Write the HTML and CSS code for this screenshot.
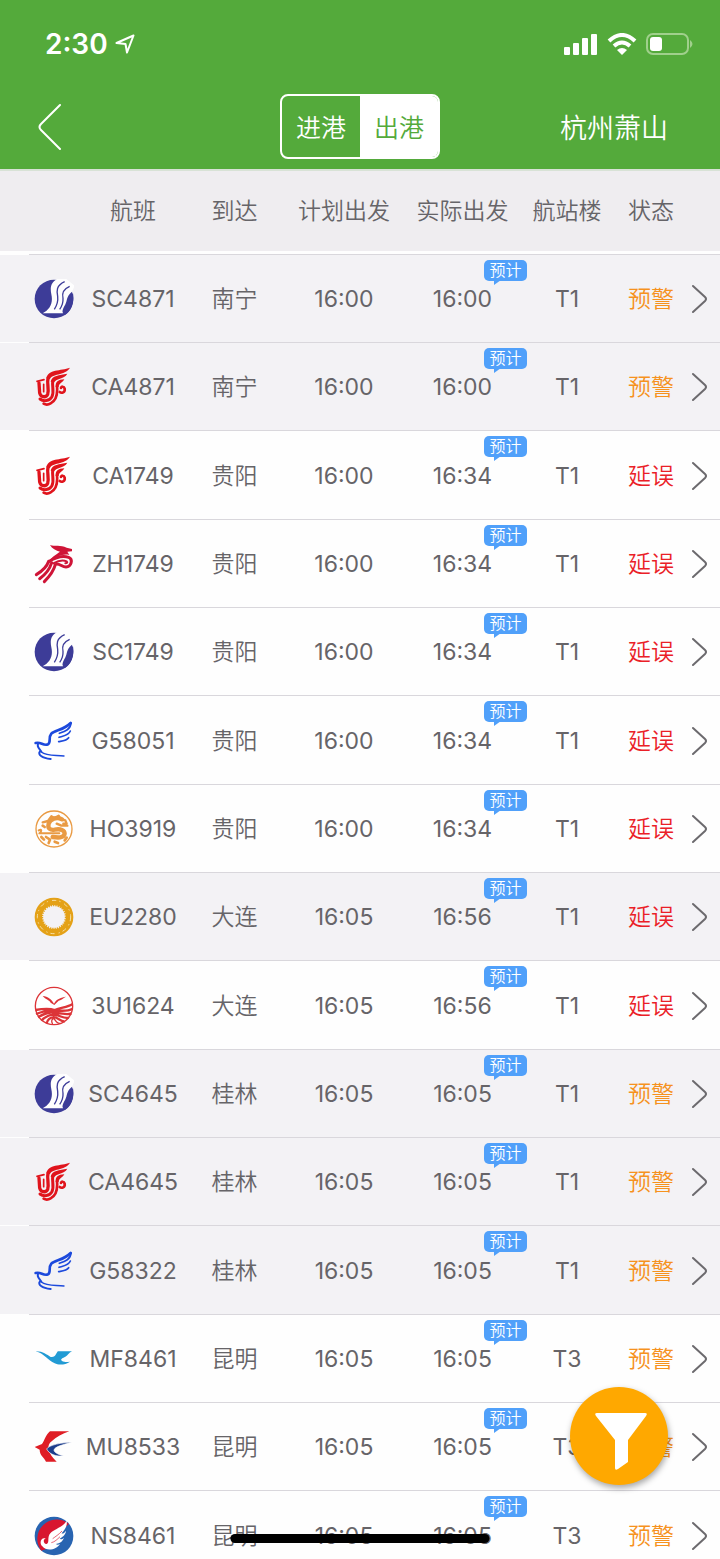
FILE: index.html
```
<!DOCTYPE html>
<html lang="zh-CN">
<head>
    <meta charset="UTF-8">
    <meta name="viewport" content="width=device-width, initial-scale=1.0">
    <title>航班动态</title>
    <link rel="stylesheet" href="styles.css">
</head>
<body>
    <!-- airline logos -->
    <svg class="sprite" aria-hidden="true">
        <symbol id="logo-SC" viewBox="0 0 120 120">
            <circle cx="60" cy="60" r="58" fill="#3d3c98"/>
            <path class="cut" d="M70 0C50 10 48 26 52 46C58 72 48 92 26 103H88C80 94 93 82 97 68C101 52 104 46 114 38L122 20L92 -4Z"/>
            <path d="M92 8C66 20 68 36 71 52C73 70 67 82 61 91M107 22C84 32 84 46 87 58C88 72 82 84 77 91" fill="none" stroke="#3d3c98" stroke-width="4"/>
            <path d="M117 43C104 54 107 68 100 84C96 94 92 100 86 103L94 107C110 98 122 72 117 43Z" fill="#3d3c98"/>
        </symbol>
        <symbol id="logo-CA" viewBox="0 0 120 120">
            <g fill="#e0141c">
                <path d="M108 2C80 12 42 6 37 34L48 37C52 18 92 28 108 2Z"/>
                <path d="M100 20C76 24 53 25 50 44L61 46C64 34 90 38 100 20Z"/>
                <path d="M91 37C72 38 64 44 65 60H74C75 48 85 48 91 37Z"/>
            </g>
            <g fill="none" stroke="#e0141c" stroke-linecap="round">
                <path d="M42 34C38 50 46 66 41 82C36 93 20 91 17 78L15 48" stroke-width="10"/>
                <path d="M56 44C54 60 61 74 54 89C47 103 28 104 18 96" stroke-width="9"/>
                <path d="M69 58C71 80 68 100 50 109C42 114 34 113 29 110" stroke-width="8"/>
                <path d="M77 75C83 80 94 76 92 65C90 57 81 58 81 63" stroke-width="8"/>
                <path d="M9 43L30 38M29 52V74" stroke-width="5"/>
            </g>
        </symbol>
        <symbol id="logo-ZH" viewBox="0 0 120 120">
            <path d="M48 3C62 8 80 2 98 11L114 15V22L100 23L106 33C88 28 68 38 48 50C54 36 70 30 78 23C66 20 54 14 48 3Z" fill="#cf1437"/>
            <g fill="none" stroke="#cf1437" stroke-linecap="round">
                <path d="M46 52C62 42 84 34 104 40C118 46 112 68 96 69C84 69 80 60 68 60" stroke-width="9"/>
                <path d="M58 58C72 50 88 47 98 52C102 56 98 58 94 58" stroke-width="6"/>
                <path d="M44 52C38 70 24 82 7 92M53 56C47 76 34 92 17 104M64 62C58 84 44 100 31 113" stroke-width="9"/>
            </g>
        </symbol>
        <symbol id="logo-G5" viewBox="0 0 120 120">
            <g fill="none" stroke="#1c49dc" stroke-linecap="round">
                <path d="M5 66C20 61 28 76 42 70C52 64 42 50 52 38C62 28 92 26 110 6" stroke-width="8"/>
                <path d="M13 67C6 78 18 84 22 92M18 91C10 100 24 112 50 114" stroke-width="6"/>
                <path d="M111 6C110 25 94 31 76 37M109 30C104 43 90 44 75 49M104 50C98 59 84 60 74 62" stroke-width="5"/>
                <path d="M22 93C38 106 62 102 90 105" stroke-width="4"/>
            </g>
        </symbol>
        <symbol id="logo-HO" viewBox="0 0 120 120">
            <g fill="none" stroke="#e99a43" stroke-linecap="round" stroke-linejoin="round">
                <circle cx="60" cy="60" r="54" stroke-width="4"/>
                <path d="M84 31C68 22 48 30 44 44C40 60 50 64 62 62C80 58 92 64 92 74C90 88 70 86 56 84" stroke-width="13"/>
                <path d="M26 40L42 36L52 22L62 28L74 20L78 30L94 34L98 44L88 44M68 44L82 50L100 50" stroke-width="7"/>
                <path d="M14 64C26 58 22 70 16 73H76" stroke-width="6"/>
                <path d="M22 84L30 92M36 84L48 92L44 102M62 98L72 102M92 94L98 86M26 50L32 54" stroke-width="8"/>
            </g>
        </symbol>
        <symbol id="logo-EU" viewBox="0 0 120 120">
            <circle cx="60" cy="60" r="47" fill="none" stroke="#e4a117" stroke-width="22"/>
            <circle cx="60" cy="60" r="35" fill="none" stroke="#e4a117" stroke-width="5" stroke-dasharray="4 3"/>
            <circle cx="60" cy="60" r="50" fill="none" stroke="#f6e0a6" stroke-width="3" stroke-dasharray="13 9 4 12"/>
        </symbol>
        <symbol id="logo-3U" viewBox="0 0 120 120">
            <circle cx="60" cy="60" r="56" fill="#fff" stroke="#dc3438" stroke-width="4"/>
            <path d="M26 30C42 31 53 41 60 53C68 37 82 35 96 32C88 36 84 42 74 44L61 57L50 50C44 40 36 42 26 30Z" fill="#dc3438"/>
            <g fill="none" stroke="#dc3438" stroke-width="7">
                <path d="M4 72C28 68 44 66 62 72C82 64 100 64 116 54M6 84C28 76 48 70 62 76C84 72 98 78 116 68M12 94C28 84 50 76 61 82C80 78 96 90 112 82M22 104C32 92 52 84 59 88C74 84 88 100 104 95M38 112C40 100 50 94 57 94C68 90 80 108 92 106"/>
                <path d="M56 114C50 106 54 98 60 96C62 104 72 114 80 112" stroke-width="4"/>
            </g>
        </symbol>
        <symbol id="logo-MF" viewBox="0 0 120 120">
            <path d="M5 37C26 36 38 47 50 54C66 57 66 41 72 37H114C104 42 102 49 94 53C86 57 80 59 82 64C86 71 98 69 108 68C94 78 74 79 62 73C42 65 30 43 5 37Z" fill="#229bd4"/>
        </symbol>
        <symbol id="logo-MU" viewBox="0 0 120 120">
            <path d="M48 13H106C84 20 68 30 54 42C34 54 44 82 68 104H36C30 90 17 86 17 68L2 60L24 51C31 42 35 23 48 13Z" fill="#df1d25"/>
            <path class="cut-line" d="M114 46C84 46 44 54 38 66C46 82 66 89 88 87C72 82 60 76 60 69C62 59 90 52 114 46Z" fill="#1d3e8d" stroke-width="2"/>
        </symbol>
        <symbol id="logo-NS" viewBox="0 0 120 120">
            <circle cx="60" cy="60" r="58" fill="#2864b1"/>
            <path d="M22 104A58 58 0 0 1 105 24C90 38 62 50 50 60L38 98Z" fill="#d8162f"/>
            <path d="M98 14C87 34 60 39 49 52C38 64 48 80 38 84C28 85 26 69 35 68C22 63 14 80 25 91C38 108 68 101 78 84C72 87 68 86 66 84C78 82 87 75 90 65C84 71 78 70 77 68C88 62 96 53 96 44C91 52 85 54 83 52C92 42 101 30 98 14Z" fill="#fff"/>
            <path d="M56 68C64 62 74 56 84 45M52 80C62 78 70 70 78 62" fill="none" stroke="#d8162f" stroke-width="2"/>
        </symbol>
    </svg>

    <div class="app">
        <header class="header">
            <div class="status-bar">
                <div class="clock">
                    <span>2:30</span>
                    <svg width="20" height="20" viewBox="0 0 20 20"><path d="M18.500 1.500L1.500 9L10.500 10L12 18.500Z" fill="none" stroke="#fff" stroke-width="2" stroke-linejoin="round"/></svg>
                </div>
                <div class="signals">
                    <svg width="34" height="22" viewBox="0 0 34 22" fill="#fff">
                        <rect x="0" y="14" width="6" height="8" rx="1"/>
                        <rect x="9" y="10" width="6" height="12" rx="1"/>
                        <rect x="18" y="5" width="6" height="17" rx="1"/>
                        <rect x="27" y="1" width="6" height="21" rx="1"/>
                    </svg>
                    <svg width="30" height="22" viewBox="0 0 30 22">
                        <path d="M2 8Q15 -4 28 8M7 13Q15 6 23 13" fill="none" stroke="#fff" stroke-width="4"/>
                        <path d="M10 17Q15 13 20 17L15 22Z" fill="#fff"/>
                    </svg>
                    <svg width="47" height="22" viewBox="0 0 47 22">
                        <rect x="1" y="1" width="41" height="20" rx="6" fill="none" stroke="#a0d08c" stroke-width="2"/>
                        <rect x="4" y="4" width="12" height="14" rx="3" fill="#fff"/>
                        <path d="M44 7Q49 11 44 15Z" fill="#a0d08c"/>
                    </svg>
                </div>
            </div>
            <nav class="nav">
                <button class="back" aria-label="返回">
                    <svg width="24" height="48" viewBox="0 0 24 48"><path d="M22 2L3 21Q0 24 3 27L22 46" fill="none" stroke="#fff" stroke-width="2" stroke-linecap="round"/></svg>
                </button>
                <div class="tabs">
                    <button class="tab" onclick="cambiarTab(this)">进港</button>
                    <button class="tab active" onclick="cambiarTab(this)">出港</button>
                </div>
                <button class="airport">杭州萧山</button>
            </nav>
        </header>

        <main class="list">
            <table class="flights">
                <colgroup>
                    <col class="col-logo">
                    <col class="col-flight">
                    <col class="col-city">
                    <col class="col-planned">
                    <col class="col-actual">
                    <col class="col-terminal">
                    <col class="col-state">
                    <col class="col-more">
                </colgroup>
                <thead>
                    <tr>
                        <th></th>
                        <th>航班</th>
                        <th>到达</th>
                        <th>计划出发</th>
                        <th>实际出发</th>
                        <th>航站楼</th>
                        <th>状态</th>
                        <th></th>
                    </tr>
                </thead>
                <tbody id="flightRows"></tbody>
            </table>
        </main>

        <button class="filter" aria-label="筛选">
            <svg width="54" height="60" viewBox="0 0 54 60"><path d="M3 2H51Q54 2 52 5L34 29V51L24 58Q21 60 21 57V29L2 5Q0 2 3 2Z" fill="#fff"/></svg>
        </button>
        <div class="home-bar"></div>
    </div>
    <script src="script.js"></script>
</body>
</html>
```
FILE: styles.css
```
* {
    box-sizing: border-box;
}

body {
    margin: 0;
    font-family: Inter, "Noto Sans CJK SC", sans-serif;
    font-size: 23px;
    font-weight: 350;
    color: #666468;
    background-color: #fefefe;
}

button {
    padding: 0;
    border: none;
    background: none;
    color: inherit;
    font: inherit;
    cursor: pointer;
}

svg {
    display: block;
}

.sprite {
    position: absolute;
    width: 0;
    height: 0;
}

.app {
    display: flex;
    flex-direction: column;
    height: 100vh;
    overflow: hidden;
}

/* header */
.header {
    flex: none;
    color: #fff;
    background-color: #54aa3b;
}

.status-bar {
    display: flex;
    align-items: center;
    justify-content: space-between;
    height: 86px;
    padding: 2px 27px 0 45px;
}

.clock {
    display: flex;
    align-items: center;
    gap: 7px;
    font-size: 28px;
    font-weight: 600;
}

.signals {
    display: flex;
    align-items: center;
    gap: 9px;
}

.nav {
    display: grid;
    grid-template-columns: 1fr 160px 1fr;
    align-items: center;
    height: 83px;
    padding: 0 52px 2px 38px;
}

.back {
    justify-self: start;
}

.tabs {
    display: flex;
    height: 65px;
    margin: 0 -7px 0 7px;
    border: 2px solid #fff;
    border-radius: 8px;
    overflow: hidden;
}

.tab {
    flex: 1;
    padding-bottom: 2px;
    font-size: 25px;
}

.tab.active {
    color: #54aa3b;
    background-color: #fff;
}

.airport {
    justify-self: end;
    font-size: 27px;
}

/* flight list */
.list {
    flex: 1;
    min-height: 0;
    overflow-y: auto;
    scrollbar-width: none;
}

.flights {
    width: 100%;
    table-layout: fixed;
    border-collapse: separate;
    border-spacing: 0;
    text-align: center;
    white-space: nowrap;
}

.col-logo { width: 84px; }
.col-flight { width: 98px; }
.col-city { width: 105px; }
.col-planned { width: 114px; }
.col-actual { width: 123px; }
.col-terminal { width: 86px; }
.col-state { width: 82px; }
.col-more { width: 28px; }

.flights th {
    position: sticky;
    top: 0;
    z-index: 1;
    height: 85px;
    padding: 0 0 4px;
    border-top: 2px solid #d8e2d6;
    border-bottom: 3px solid #fefefe;
    background-color: #efedf0;
    font-weight: 350;
}

.flights td {
    height: 88px;
    padding: 2px 0 0;
    font-weight: 400;
}

.flights tr:nth-child(3n) td {
    height: 89px;
}

.flights .city,
.flights .state {
    padding: 0 0 2px;
    font-weight: 350;
}

/* the separator starts at the logo, not at the edge */
.flights tbody tr {
    background: linear-gradient(#d9d7dc, #d9d7dc) 29px 0 / 100% 1px no-repeat;
}

.flights tbody tr.gray {
    background:
        linear-gradient(#d9d7dc, #d9d7dc) 29px 0 / 100% 1px no-repeat,
        linear-gradient(#fefefe, #fefefe) 0 0 / 100% 1px no-repeat,
        #f3f2f5;
}

.logo {
    width: 40px;
    height: 40px;
    margin-left: 34px;
}

.cut {
    fill: #fefefe;
}

.gray .cut {
    fill: #f3f2f5;
}

.cut-line {
    stroke: #fefefe;
}

.actual {
    position: relative;
}

.tag {
    position: absolute;
    top: 6px;
    left: 83px;
    width: 43px;
    height: 21px;
    border-radius: 5px;
    background-color: #50a0fa;
    color: #fff;
    font-size: 16px;
    font-weight: 350;
    line-height: 21px;
}

.tag::after {
    content: "";
    position: absolute;
    top: 20px;
    left: 10px;
    border-top: 5px solid #50a0fa;
    border-right: 7px solid transparent;
}

.flights .warning {
    color: #f6921e;
}

.flights .delay {
    color: #ea2027;
}

/* floating parts */
.filter {
    position: fixed;
    right: 52px;
    bottom: 74px;
    z-index: 2;
    display: flex;
    align-items: center;
    justify-content: center;
    width: 98px;
    height: 98px;
    padding-top: 10px;
    padding-left: 4px;
    border-radius: 50%;
    background-color: #ffa800;
    box-shadow: 1px 3px 6px rgba(0, 0, 0, 0.35);
}

.home-bar {
    position: fixed;
    bottom: 16px;
    left: 50%;
    z-index: 2;
    width: 36%;
    height: 9px;
    border-radius: 5px;
    background-color: #000;
    transform: translateX(-50%);
}
```
FILE: script.js
```
let flights = [
    {"flight":"SC4871","city":"南宁","planned":"16:00","actual":"16:00","terminal":"T1","state":"预警","gray":true},
    {"flight":"CA4871","city":"南宁","planned":"16:00","actual":"16:00","terminal":"T1","state":"预警","gray":true},
    {"flight":"CA1749","city":"贵阳","planned":"16:00","actual":"16:34","terminal":"T1","state":"延误","gray":false},
    {"flight":"ZH1749","city":"贵阳","planned":"16:00","actual":"16:34","terminal":"T1","state":"延误","gray":false},
    {"flight":"SC1749","city":"贵阳","planned":"16:00","actual":"16:34","terminal":"T1","state":"延误","gray":false},
    {"flight":"G58051","city":"贵阳","planned":"16:00","actual":"16:34","terminal":"T1","state":"延误","gray":false},
    {"flight":"HO3919","city":"贵阳","planned":"16:00","actual":"16:34","terminal":"T1","state":"延误","gray":false},
    {"flight":"EU2280","city":"大连","planned":"16:05","actual":"16:56","terminal":"T1","state":"延误","gray":true},
    {"flight":"3U1624","city":"大连","planned":"16:05","actual":"16:56","terminal":"T1","state":"延误","gray":false},
    {"flight":"SC4645","city":"桂林","planned":"16:05","actual":"16:05","terminal":"T1","state":"预警","gray":true},
    {"flight":"CA4645","city":"桂林","planned":"16:05","actual":"16:05","terminal":"T1","state":"预警","gray":true},
    {"flight":"G58322","city":"桂林","planned":"16:05","actual":"16:05","terminal":"T1","state":"预警","gray":true},
    {"flight":"MF8461","city":"昆明","planned":"16:05","actual":"16:05","terminal":"T3","state":"预警","gray":false},
    {"flight":"MU8533","city":"昆明","planned":"16:05","actual":"16:05","terminal":"T3","state":"预警","gray":false},
    {"flight":"NS8461","city":"昆明","planned":"16:05","actual":"16:05","terminal":"T3","state":"预警","gray":false}
];

function mostrarVuelos(){
    let html = "";
    for(let f of flights){
        //the first two letters are the airline code
        let airline = f.flight.substring(0,2);
        html += `<tr class="${f.gray ? "gray" : ""}">
            <td><svg class="logo"><use href="#logo-${airline}"/></svg></td>
            <td>${f.flight}</td>
            <td class="city">${f.city}</td>
            <td>${f.planned}</td>
            <td class="actual">${f.actual}<span class="tag">预计</span></td>
            <td>${f.terminal}</td>
            <td class="state ${f.state == "延误" ? "delay" : "warning"}">${f.state}</td>
            <td><a href="#${f.flight}" aria-label="${f.flight}"><svg width="16" height="30" viewBox="0 0 16 30"><path d="M1 2L13 13Q15 15 13 17L1 28" fill="none" stroke="#6c6a6e" stroke-width="2" stroke-linecap="round"/></svg></a></td>
        </tr>`;
    }
    document.getElementById("flightRows").innerHTML = html;
}

function cambiarTab(tab){
    for(let t of document.querySelectorAll(".tab")){
        t.classList.remove("active");
    }
    tab.classList.add("active");
}

mostrarVuelos();
```
